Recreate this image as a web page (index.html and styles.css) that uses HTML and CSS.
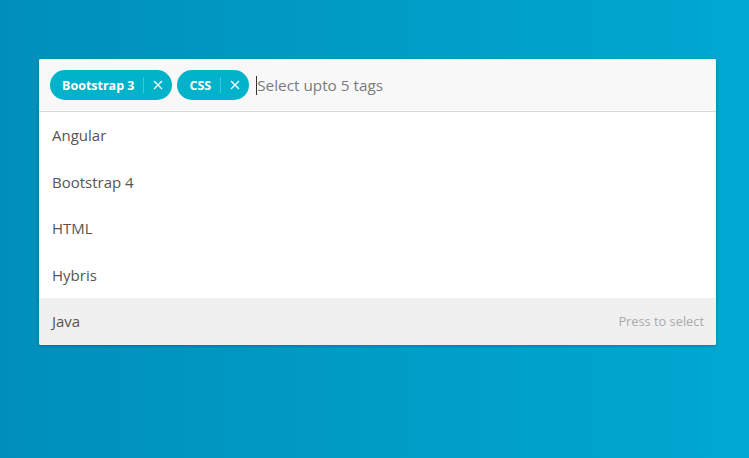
FILE: index.html
```html
<!DOCTYPE html>
<html lang="en">
<head>
<meta charset="utf-8">
<title>Tags input</title>
<link rel="stylesheet" href="styles.css">
</head>
<body>
<div class="page">
  <div class="select">
    <div class="control">
      <span class="tag"><span class="tag-label">Bootstrap 3</span><span class="tag-sep"></span><svg class="tag-x" viewBox="0 0 10 10" width="10" height="10"><path d="M1 1L9 9M9 1L1 9" stroke="#fff" stroke-width="1.3" fill="none"/></svg></span>
      <span class="tag"><span class="tag-label">CSS</span><span class="tag-sep"></span><svg class="tag-x" viewBox="0 0 10 10" width="10" height="10"><path d="M1 1L9 9M9 1L1 9" stroke="#fff" stroke-width="1.3" fill="none"/></svg></span>
      <span class="input"><span class="caret"></span><span class="placeholder">Select upto 5 tags</span></span>
    </div>
    <ul class="menu">
      <li class="option">Angular</li>
      <li class="option">Bootstrap 4</li>
      <li class="option">HTML</li>
      <li class="option">Hybris</li>
      <li class="option active"><span>Java</span><span class="hint">Press to select</span></li>
    </ul>
  </div>
</div>
</body>
</html>
```

FILE: styles.css
```css
html, body {
  margin: 0;
  padding: 0;
  height: 100%;
}
body {
  background: linear-gradient(90deg, #008fbb 0%, #009cc6 50%, #00a8d1 100%);
  font-family: "Open Sans", "Noto Sans", sans-serif;
}
.page {
  padding: 59px 33px 0 39px;
}
.select {
  background: #fff;
  border-radius: 2px;
  box-shadow: 0 1px 3px rgba(0, 40, 70, 0.35);
  overflow: hidden;
}
.control {
  display: flex;
  align-items: center;
  gap: 5px;
  height: 53px;
  padding: 0 11px;
  background: #f8f8f8;
  border-bottom: 1px solid #d9d9d9;
  box-sizing: border-box;
}
.tag {
  display: inline-flex;
  align-items: center;
  height: 30px;
  border-radius: 15px;
  background: #00b3cb;
  color: #fff;
  padding: 0 9px 0 12px;
  font-size: 12.5px;
  font-weight: 700;
}
.tag-sep {
  width: 1px;
  height: 16px;
  background: rgba(255, 255, 255, 0.25);
  margin: 0 9px 0 9px;
}
.tag-x {
  display: block;
}
.input {
  display: inline-flex;
  align-items: center;
  margin-left: 2px;
}
.caret {
  width: 1px;
  height: 19px;
  background: #333;
}
.placeholder {
  color: #7a7a7a;
  font-size: 15.3px;
}
.menu {
  list-style: none;
  margin: 0;
  padding: 0;
}
.option {
  display: flex;
  align-items: center;
  justify-content: space-between;
  height: 46.5px;
  padding: 0 12px 0 13px;
  color: #555;
  font-size: 15px;
}
.option.active {
  background: #f0f0f0;
}
.hint {
  color: #aaa;
  font-size: 12.8px;
}
```
